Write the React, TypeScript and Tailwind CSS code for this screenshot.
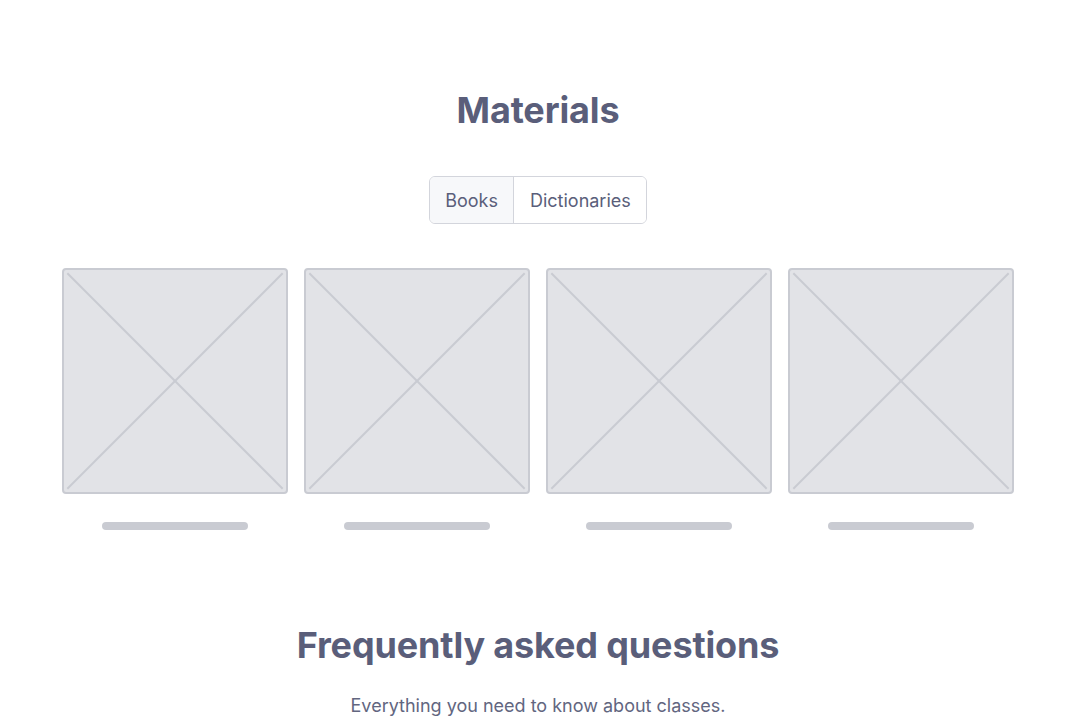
import { useState } from "react";

function Placeholder() {
  return (
    <div className="flex flex-col items-center">
      <div className="w-full aspect-square rounded-[4px] border-2 border-[#c9cbd2] bg-[#e2e3e7] overflow-hidden">
        <svg viewBox="0 0 100 100" preserveAspectRatio="none" className="w-full h-full block">
          <line x1="1.5" y1="1.5" x2="98.5" y2="98.5" stroke="#c9cbd2" strokeWidth="2" vectorEffect="non-scaling-stroke" />
          <line x1="98.5" y1="1.5" x2="1.5" y2="98.5" stroke="#c9cbd2" strokeWidth="2" vectorEffect="non-scaling-stroke" />
        </svg>
      </div>
      <div className="mt-7 h-2 w-[65%] rounded-full bg-[#c9cbd2]" />
    </div>
  );
}

export default function App() {
  const [tab, setTab] = useState("Books");

  return (
    <div className="min-h-screen bg-white font-['Inter',sans-serif] text-[#5a5e7a]">
      <div className="max-w-[952px] mx-auto pt-[90px]">
        {/* MATERIALS */}
        <h1 className="text-center text-[36px] leading-10 font-bold tracking-[-0.004em]">Materials</h1>

        <div className="flex justify-center mt-[46px]">
          <div className="flex rounded-md border border-[#d3d5dc] overflow-hidden">
            {["Books", "Dictionaries"].map((t, i) => (
              <button
                key={t}
                onClick={() => setTab(t)}
                className={`px-[15.5px] h-[46px] pt-[2px] text-lg leading-7 ${
                  i > 0 ? "border-l border-[#d3d5dc]" : ""
                } ${tab === t ? "bg-[#f7f8fa]" : "bg-white"}`}
              >
                {t}
              </button>
            ))}
          </div>
        </div>

        <div className="grid grid-cols-4 gap-4 mt-11">
          {[0, 1, 2, 3].map((i) => (
            <Placeholder key={i} />
          ))}
        </div>

        {/* FAQ */}
        <h2 className="text-center text-[36px] leading-10 font-bold tracking-[-0.004em] mt-[95px]">
          Frequently asked questions
        </h2>
        <p className="text-center text-lg leading-7 mt-[27px] text-[#62667f]">
          Everything you need to know about classes.
        </p>
      </div>
    </div>
  );
}
